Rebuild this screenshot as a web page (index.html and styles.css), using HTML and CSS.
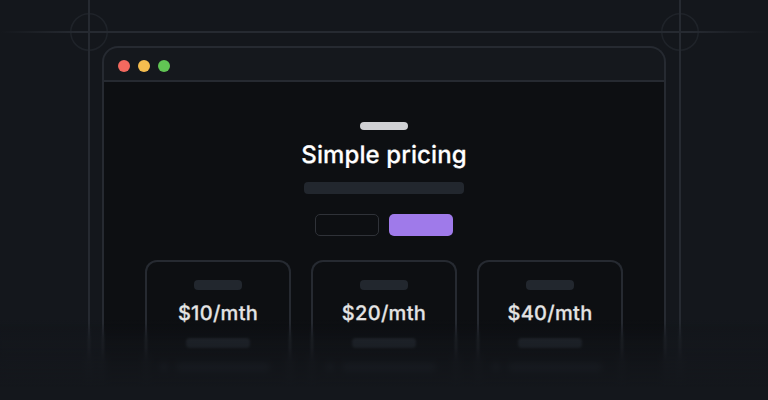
FILE: index.html
```html
<!DOCTYPE html>
<html lang="en">
<head>
<meta charset="utf-8">
<title>Simple pricing</title>
<link rel="stylesheet" href="styles.css">
</head>
<body>
<svg class="guides" width="768" height="400" viewBox="0 0 768 400" fill="none" aria-hidden="true">
  <defs>
    <linearGradient id="fadeH" x1="0" y1="0" x2="768" y2="0" gradientUnits="userSpaceOnUse">
      <stop offset="0" stop-color="#262a31" stop-opacity="0"/>
      <stop offset="0.1" stop-color="#262a31"/>
      <stop offset="0.9" stop-color="#262a31"/>
      <stop offset="1" stop-color="#262a31" stop-opacity="0"/>
    </linearGradient>
  </defs>
  <circle cx="89" cy="32" r="18.25" stroke="#1f2329" stroke-width="1.5"/>
  <circle cx="680" cy="32" r="18.25" stroke="#1f2329" stroke-width="1.5"/>
  <rect x="0" y="31" width="768" height="2" fill="url(#fadeH)"/>
  <rect x="88" y="0" width="2" height="400" fill="#262a31"/>
  <rect x="679" y="0" width="2" height="400" fill="#262a31"/>
</svg>
<main class="window">
  <header class="titlebar">
    <span class="dot dot-red"></span>
    <span class="dot dot-yellow"></span>
    <span class="dot dot-green"></span>
  </header>
  <section class="content">
    <div class="bar bar-eyebrow"></div>
    <h1 class="title">Simple pricing</h1>
    <div class="bar bar-sub"></div>
    <div class="buttons">
      <div class="btn btn-ghost"></div>
      <div class="btn btn-primary"></div>
    </div>
    <div class="cards">
      <article class="card">
        <div class="bar bar-label"></div>
        <div class="price">$10/mth</div>
        <div class="bar bar-note"></div>
        <div class="feature"><span class="tick"></span><span class="bar bar-feature"></span></div>
      </article>
      <article class="card">
        <div class="bar bar-label"></div>
        <div class="price">$20/mth</div>
        <div class="bar bar-note"></div>
        <div class="feature"><span class="tick"></span><span class="bar bar-feature"></span></div>
      </article>
      <article class="card">
        <div class="bar bar-label"></div>
        <div class="price">$40/mth</div>
        <div class="bar bar-note"></div>
        <div class="feature"><span class="tick"></span><span class="bar bar-feature"></span></div>
      </article>
    </div>
  </section>
</main>
<div class="blur blur-soft"></div>
<div class="blur blur-strong"></div>
<div class="fade"></div>
</body>
</html>
```

FILE: styles.css
```css
* { box-sizing: border-box; }

html, body { margin: 0; height: 400px; }

body {
  position: relative;
  overflow: hidden;
  padding: 46px 102px 0;
  background: #14171c;
  font-family: Inter, "Liberation Sans", sans-serif;
  text-rendering: geometricPrecision;
}

.guides { position: absolute; left: 0; top: 0; }

.window {
  position: relative;
  display: flex;
  flex-direction: column;
  width: 564px;
  height: 354px;
  border: 2px solid #262a31;
  border-bottom: 0;
  border-radius: 16px 16px 0 0;
  background: #15181d;
  overflow: hidden;
}

.titlebar {
  display: flex;
  align-items: center;
  flex: none;
  gap: 8px;
  height: 34px;
  padding: 4px 0 0 14px;
  border-bottom: 2px solid #262a31;
}

.dot { width: 12px; height: 12px; border-radius: 50%; }
.dot-red { background: #f2695f; }
.dot-yellow { background: #f5bd4f; }
.dot-green { background: #61c554; }

.content {
  display: flex;
  flex: 1;
  flex-direction: column;
  align-items: center;
  padding-top: 40px;
  background: #0d0f12;
}

.bar { display: block; background: #22272e; border-radius: 4px; }
.bar-eyebrow { width: 48px; height: 8px; background: #d0d1d4; }
.bar-sub { width: 160px; height: 12px; margin-top: 12px; }
.bar-label { width: 48px; height: 10px; }
.bar-note { width: 64px; height: 10px; margin-top: 12px; }
.bar-feature { width: 94px; height: 8px; }

.title {
  margin: 10px 0 0;
  height: 30px;
  color: #fff;
  font-size: 24px;
  font-weight: 500;
  line-height: 30px;
  letter-spacing: 0.1px;
  -webkit-text-stroke: 0.25px #fff;
}

.buttons { display: flex; gap: 10px; margin-top: 20px; }

.btn { width: 64px; height: 22px; border-radius: 5px; }
.btn-ghost { border: 1px solid #2f3238; }
.btn-primary { background: #9f7aea; }

.cards { display: flex; gap: 20px; margin-top: 24px; }

.card {
  display: flex;
  flex-direction: column;
  align-items: center;
  width: 146px;
  height: 140px;
  padding-top: 18px;
  border: 2px solid #262a31;
  border-bottom: 0;
  border-radius: 12px 12px 0 0;
}

.price {
  margin-top: 10px;
  height: 26px;
  color: #e4e4e4;
  font-size: 20px;
  font-weight: 500;
  line-height: 26px;
  letter-spacing: 0.3px;
  -webkit-text-stroke: 0.25px #e4e4e4;
}

.feature {
  display: flex;
  align-items: center;
  align-self: flex-start;
  gap: 8px;
  margin-top: 16px;
  padding-left: 13px;
}

.tick { width: 8px; height: 8px; border-radius: 50%; background: #22272e; }

.blur {
  position: absolute;
  left: 0;
  right: 0;
  bottom: 0;
}

.blur-soft {
  height: 76px;
  -webkit-backdrop-filter: blur(1.2px);
  backdrop-filter: blur(1.2px);
  -webkit-mask-image: linear-gradient(to bottom, transparent 0%, #000 16px);
  mask-image: linear-gradient(to bottom, transparent 0%, #000 16px);
}

.blur-strong {
  height: 52px;
  -webkit-backdrop-filter: blur(3px);
  backdrop-filter: blur(3px);
  -webkit-mask-image: linear-gradient(to bottom, transparent 0%, #000 14px);
  mask-image: linear-gradient(to bottom, transparent 0%, #000 14px);
}

.fade {
  position: absolute;
  left: 0;
  right: 0;
  bottom: 0;
  height: 80px;
  background: linear-gradient(to bottom, rgba(20, 23, 28, 0) 0%, rgba(20, 23, 28, 0.4) 25%, rgba(20, 23, 28, 0.75) 57%, #14171c 85%);
}
```
